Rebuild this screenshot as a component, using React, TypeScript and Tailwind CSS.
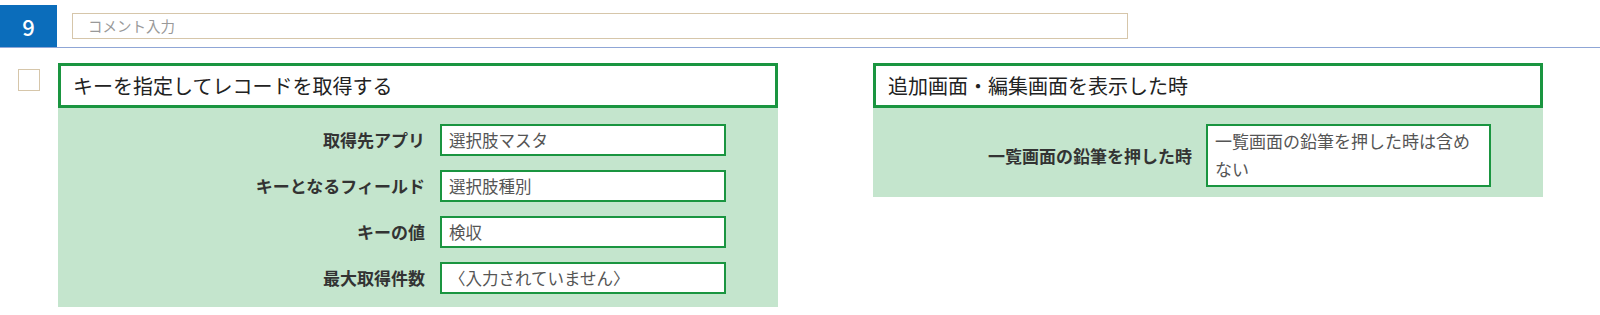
const font = { fontFamily: '"Noto Sans CJK JP", "Noto Sans", sans-serif' }

function Field({ value, className = "" }: { value: string; className?: string }) {
  return (
    <div className={`flex items-center border-2 border-[#1a9540] bg-white px-[7px] text-[16.5px] text-[#555] ${className}`}>
      {value}
    </div>
  )
}

function PanelHeader({ title }: { title: string }) {
  return (
    <div className="flex h-[45px] items-center border-[3px] border-[#1a9540] bg-white px-3 text-[20px] text-[#222]">
      {title}
    </div>
  )
}

export default function App() {
  const rows = [
    { label: "取得先アプリ", value: "選択肢マスタ" },
    { label: "キーとなるフィールド", value: "選択肢種別" },
    { label: "キーの値", value: "検収" },
    { label: "最大取得件数", value: "〈入力されていません〉" },
  ]

  return (
    <div className="h-[315px] w-[1600px] bg-white" style={font}>
      <div className="flex items-center border-b border-[#8fa6d6] pt-[5px]">
        <div className="flex h-[42px] w-[57px] items-center justify-center bg-[#0b6dbb] text-[22px] font-medium text-white">
          9
        </div>
        <div className="ml-[15px] flex h-[26px] w-[1056px] items-center border border-[#d6c6aa] px-[15px] text-[14.5px] text-[#999]">
          コメント入力
        </div>
      </div>

      <div className="flex items-start pl-[18px] pt-[15px]">
        <div className="mt-[6px] h-[22px] w-[22px] border border-[#d6c6aa] bg-white" />

        <div className="ml-[18px] w-[720px] bg-[#c4e5cd]">
          <PanelHeader title="キーを指定してレコードを取得する" />
          <div className="grid grid-cols-[367px_286px] gap-x-[15px] gap-y-[14px] pb-[13px] pt-[16px]">
            {rows.map((r) => (
              <div key={r.label} className="contents">
                <div className="flex items-center justify-end text-[17px] font-bold text-[#333]">{r.label}</div>
                <Field value={r.value} className="h-[32px]" />
              </div>
            ))}
          </div>
        </div>

        <div className="ml-[95px] w-[670px] bg-[#c4e5cd]">
          <PanelHeader title="追加画面・編集画面を表示した時" />
          <div className="flex items-center gap-[14px] pb-[10px] pt-[16px]">
            <div className="w-[319px] text-right text-[17px] font-bold text-[#333]">一覧画面の鉛筆を押した時</div>
            <div className="h-[63px] w-[285px] border-2 border-[#1a9540] bg-white pl-[7px] pr-[12px] pt-[1px] text-[17px] leading-[28px] text-[#555]">
              一覧画面の鉛筆を押した時は含めない
            </div>
          </div>
        </div>
      </div>
    </div>
  )
}
